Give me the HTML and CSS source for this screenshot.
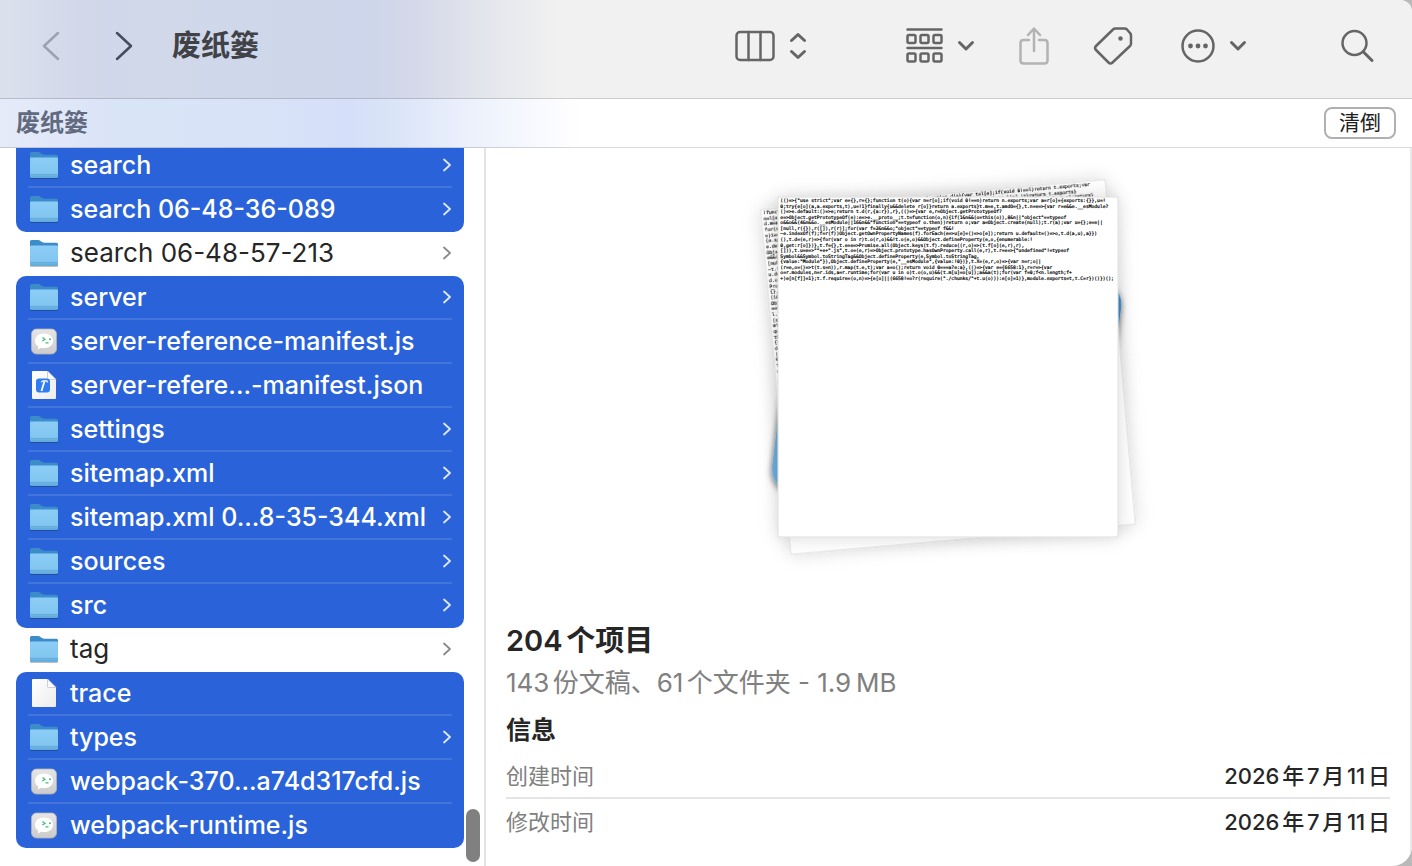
FILE: index.html
```html
<!DOCTYPE html>
<html lang="zh-CN">
<head>
    <meta charset="UTF-8">
    <meta name="viewport" content="width=device-width, initial-scale=1.0">
    <title>废纸篓</title>
    <link rel="stylesheet" href="styles.css">
</head>
<body>
    <!-- shared icons -->
    <svg class="sprite" aria-hidden="true">
        <defs>
            <linearGradient id="folder-front" x1="0" y1="0" x2="0" y2="1">
                <stop offset="0" stop-color="#8bcdf6"/>
                <stop offset="0.75" stop-color="#82c5f0"/>
                <stop offset="1" stop-color="#62acdb"/>
            </linearGradient>
            <linearGradient id="paper" x1="0" y1="0" x2="1" y2="1">
                <stop offset="0" stop-color="#ffffff"/>
                <stop offset="1" stop-color="#ececec"/>
            </linearGradient>
            <linearGradient id="app-bg" x1="0" y1="0" x2="0" y2="1">
                <stop offset="0" stop-color="#e6e6e6"/>
                <stop offset="1" stop-color="#cbcbcb"/>
            </linearGradient>
        </defs>
        <symbol id="folder" viewBox="0 0 32 32">
            <path d="M3 29h26" stroke="#000" stroke-opacity=".25" stroke-width="2" stroke-linecap="round"/>
            <path d="M2 4.500Q2 3 3.500 3H10q1.500 0 2.500 1l1.500 1q1 .7 2.500 .7H28.500Q30 5.700 30 7.200V14H2z" fill="#3c8cc9"/>
            <path d="M2 9.500Q2 8.500 3 8.500H29q1 0 1 1V27.500q0 1.500-1.500 1.500H3.500Q2 29 2 27.500z" fill="url(#folder-front)"/>
            <path d="M2 25.500H30M2 27.200H30" stroke="#5ba3d3" stroke-width=".6"/>
        </symbol>
        <symbol id="wechat" viewBox="0 0 32 32">
            <rect x="3.500" y="4" width="25" height="25" rx="5" fill="url(#app-bg)" stroke="#b4b4b4" stroke-width=".8"/>
            <path d="M16 8.500c-5.500 0-9 3.200-9 7.200 0 2.600 1.300 4.600 3.300 5.900l-.4 3 3.200-1.800c.9.200 1.900.3 2.900.3 5.500 0 9-3.300 9-7.400S21.500 8.500 16 8.500z" fill="#fff"/>
            <path d="M14.500 12.500l2.500 2-2.800 1.500M17.500 17.800h3" fill="none" stroke="#42bd74" stroke-width="1.200"/>
            <circle cx="22" cy="14.200" r="1" fill="#42bd74"/>
        </symbol>
        <symbol id="doc" viewBox="0 0 32 32">
            <path d="M5 2H19.500L28 10.500V29q0 1-1 1H5q-1 0-1-1V3q0-1 1-1z" fill="url(#paper)"/>
            <path d="M19.500 2V9.500q0 1 1 1H28z" fill="#fafafa" stroke="#c4c4c4" stroke-width=".8"/>
        </symbol>
        <symbol id="json" viewBox="0 0 32 32">
            <use href="#doc"/>
            <rect x="8" y="9.500" width="14" height="14" rx="3" fill="#2f7df0"/>
            <path d="M16.500 12l-3 10" stroke="#fff" stroke-width="1.800"/>
            <path d="M13 13q3-2 6-1l.5 1.500" fill="none" stroke="#dce9fb" stroke-width="1.500"/>
        </symbol>
        <symbol id="more-right" viewBox="0 0 10 14">
            <path d="M2 1.500L8 7 2 12.500" fill="none" stroke="currentColor" stroke-width="1.800" stroke-linecap="round" stroke-linejoin="round"/>
        </symbol>
        <symbol id="down" viewBox="0 0 18 12">
            <path d="M2.500 2.500L9 9l6.500-6.500" fill="none" stroke="currentColor" stroke-width="3" stroke-linecap="round" stroke-linejoin="round"/>
        </symbol>
    </svg>

    <div class="window">
        <header class="toolbar">
            <button class="tool disabled" aria-label="后退" disabled>
                <svg width="20" height="30" viewBox="0 0 20 30"><path d="M17 2L3 15l14 13" class="line"/></svg>
            </button>
            <button class="tool forward" aria-label="前进">
                <svg width="20" height="30" viewBox="0 0 20 30"><path d="M3 2l14 13L3 28" class="line"/></svg>
            </button>
            <h1>废纸篓</h1>
            <div class="tools">
                <button class="tool view" aria-label="显示方式">
                    <svg width="40" height="32" viewBox="0 0 40 32"><rect x="1.500" y="2" width="37" height="28" rx="3.500" class="line"/><path d="M13.500 2v28M25.500 2v28" class="line"/></svg>
                    <svg width="18" height="28" viewBox="0 0 18 28"><path d="M2.500 8.500L9 2.500l6.500 6M2.500 19.500L9 25.500l6.500-6" class="line bold"/></svg>
                </button>
                <button class="tool group" aria-label="分组">
                    <svg width="37" height="38" viewBox="0 0 37 38">
                        <path d="M1.500 2.500h34M1.500 21h34" class="line"/>
                        <g class="line">
                            <rect x="1.500" y="8" width="8" height="8" rx="1.500"/><rect x="14.500" y="8" width="8" height="8" rx="1.500"/><rect x="27.500" y="8" width="8" height="8" rx="1.500"/>
                            <rect x="1.500" y="26.500" width="8" height="8" rx="1.500"/><rect x="14.500" y="26.500" width="8" height="8" rx="1.500"/><rect x="27.500" y="26.500" width="8" height="8" rx="1.500"/>
                        </g>
                    </svg>
                    <svg width="18" height="12"><use href="#down"/></svg>
                </button>
                <button class="tool disabled" aria-label="共享" disabled>
                    <svg width="30" height="40" viewBox="0 0 30 40"><path d="M10 14H4.500Q1.500 14 1.500 17V34.500q0 3 3 3h21q3 0 3-3V17q0-3-3-3H20M15 25V3M9 9l6-6.500L21 9" class="line"/></svg>
                </button>
                <button class="tool" aria-label="标签">
                    <svg width="44" height="40" viewBox="0 0 44 40"><path d="M20 3.500q1-1 2.500-1h9q1.500 0 2.500 1l3 3.500q1 1 1 2.500v8q0 1.500-1 2.500L19.500 36.500q-2 2-4 0L3 24q-2-2 0-4z" class="line"/><circle cx="27.500" cy="12.500" r="2.200" fill="currentColor"/></svg>
                </button>
                <button class="tool more" aria-label="更多">
                    <svg width="34" height="34" viewBox="0 0 34 34"><circle cx="17" cy="17" r="15.500" class="line"/><g fill="currentColor"><circle cx="9.500" cy="17" r="2.400"/><circle cx="17" cy="17" r="2.400"/><circle cx="24.500" cy="17" r="2.400"/></g></svg>
                    <svg width="18" height="12"><use href="#down"/></svg>
                </button>
                <button class="tool" aria-label="搜索">
                    <svg width="34" height="34" viewBox="0 0 34 34"><circle cx="13.500" cy="14" r="12" class="line"/><path d="M22.500 23l8.500 8.500" class="line bold"/></svg>
                </button>
            </div>
        </header>

        <div class="trash-bar">
            <h2>废纸篓</h2>
            <button class="empty">清倒</button>
        </div>

        <main class="content">
            <nav class="column" aria-label="文件">
                <ul>
                    <li class="selected"><a href="#"><svg class="icon"><use href="#folder"/></svg><span>search</span><svg class="arrow"><use href="#more-right"/></svg></a></li>
                    <li class="selected last"><a href="#"><svg class="icon"><use href="#folder"/></svg><span>search 06-48-36-089</span><svg class="arrow"><use href="#more-right"/></svg></a></li>
                    <li><a href="#"><svg class="icon"><use href="#folder"/></svg><span>search 06-48-57-213</span><svg class="arrow"><use href="#more-right"/></svg></a></li>
                    <li class="selected first"><a href="#"><svg class="icon"><use href="#folder"/></svg><span>server</span><svg class="arrow"><use href="#more-right"/></svg></a></li>
                    <li class="selected"><a href="#"><svg class="icon"><use href="#wechat"/></svg><span>server-reference-manifest.js</span></a></li>
                    <li class="selected"><a href="#"><svg class="icon"><use href="#json"/></svg><span>server-refere...-manifest.json</span></a></li>
                    <li class="selected"><a href="#"><svg class="icon"><use href="#folder"/></svg><span>settings</span><svg class="arrow"><use href="#more-right"/></svg></a></li>
                    <li class="selected"><a href="#"><svg class="icon"><use href="#folder"/></svg><span>sitemap.xml</span><svg class="arrow"><use href="#more-right"/></svg></a></li>
                    <li class="selected"><a href="#"><svg class="icon"><use href="#folder"/></svg><span>sitemap.xml 0...8-35-344.xml</span><svg class="arrow"><use href="#more-right"/></svg></a></li>
                    <li class="selected"><a href="#"><svg class="icon"><use href="#folder"/></svg><span>sources</span><svg class="arrow"><use href="#more-right"/></svg></a></li>
                    <li class="selected last"><a href="#"><svg class="icon"><use href="#folder"/></svg><span>src</span><svg class="arrow"><use href="#more-right"/></svg></a></li>
                    <li><a href="#"><svg class="icon"><use href="#folder"/></svg><span>tag</span><svg class="arrow"><use href="#more-right"/></svg></a></li>
                    <li class="selected first"><a href="#"><svg class="icon"><use href="#doc"/></svg><span>trace</span></a></li>
                    <li class="selected"><a href="#"><svg class="icon"><use href="#folder"/></svg><span>types</span><svg class="arrow"><use href="#more-right"/></svg></a></li>
                    <li class="selected"><a href="#"><svg class="icon"><use href="#wechat"/></svg><span>webpack-370...a74d317cfd.js</span></a></li>
                    <li class="selected last"><a href="#"><svg class="icon"><use href="#wechat"/></svg><span>webpack-runtime.js</span></a></li>
                </ul>
                <div class="thumb"></div>
            </nav>

            <section class="preview">
                <div class="stack">
                    <svg class="sheets" viewBox="0 0 1260 1260">
                        <defs>
                            <filter id="shadow" x="-10%" y="-10%" width="120%" height="120%">
                                <feDropShadow dx="0" dy="0" stdDeviation="27" flood-opacity=".15"/>
                            </filter>
                            <filter id="dark-shadow" x="-10%" y="-10%" width="120%" height="120%">
                                <feDropShadow dx="0" dy="6" stdDeviation="9" flood-opacity=".6"/>
                            </filter>
                            <clipPath id="sheet-clip"><rect x="111" y="96" width="1038" height="1038"/></clipPath>
                        </defs>
                        <!-- folder at the bottom of the pile -->
                        <g transform="rotate(7 630 678)" filter="url(#dark-shadow)">
                            <rect x="135" y="309" width="981" height="738" rx="72" fill="#6db3e2"/>
                            <path d="M135 460V381q0-72 72-72H1044q72 0 72 72v79z" fill="#3f8fd2"/>
                        </g>
                        <g transform="rotate(-5 630 615)" filter="url(#shadow)">
                            <rect x="111" y="96" width="1038" height="1038" class="sheet"/>
                            <g class="code" clip-path="url(#sheet-clip)">
                                <text x="118" y="111">!function(){"use strict";var e,t,r,n,o,u={},l={},i=null,a;function d(e){var t=l[e];if(void 0!==l)return t.exports;var</text>
                                <text x="118" y="128">n=l[e]={exports:{}},r=!0;try{u[e].call(n.exports,n,n.exports,d),r=!1}finally{r&amp;&amp;delete l[e],!t}return t.exports}</text>
                                <text x="118" y="145">d.m=a,e=[],d.O=function(t,r,n,o){if(r){o=o||0;for(var u=e.length;u&gt;0&amp;&amp;e[u-1][2]&gt;o;u--)e[u]=e[u-1];e[u]=[r,n,o];return}</text>
                                <text x="118" y="162">for(s=0;s</text><text x="118" y="179">=)i==o&amp;&amp;</text><text x="118" y="196">{e.splice</text>
                                <text x="118" y="213">e.default</text><text x="118" y="230">Object.ge</text><text x="118" y="247">e&amp;&amp;(this)</text>
                                <text x="118" y="264">[null,r({</text><text x="118" y="281">~t.index</text><text x="118" y="298">u.default</text>
                                <text x="118" y="315">d.o(r,n)</text><text x="118" y="332">Promise.a</text><text x="118" y="349">{},t.u=fu</text>
                                <text x="118" y="366">(i&amp;&amp;this.</text><text x="118" y="383">Object.pr</text><text x="118" y="400">==typeof</text>
                                <text x="118" y="417">l.length</text><text x="118" y="434">(script,</text><text x="118" y="451">attribut</text>
                                <text x="118" y="468">queueMic</text><text x="118" y="485">this.glob</text><text x="118" y="502">{value:1}</text>
                                <text x="118" y="519">default:</text><text x="118" y="536">(e,t)=&gt;{</text><text x="118" y="553">0!==e[t]</text>
                                <text x="118" y="570">t.push(f</text><text x="118" y="587">define</text><text x="118" y="604">.then</text>
                                <text x="118" y="621">e.src</text><text x="118" y="638">0;var</text><text x="118" y="655">t.nc</text>
                            </g>
                        </g>
                        <g filter="url(#shadow)">
                            <rect x="120" y="105" width="1020" height="1020" class="sheet"/>
                        </g>
                        <g class="code">
                            <text x="127" y="120">(()=&gt;{"use strict";var e={},r={};function t(o){var n=r[o];if(void 0!==n)return n.exports;var a=r[o]={exports:{}},u=!</text>
                            <text x="127" y="137">0;try{e[o](a,a.exports,t),u=!1}finally{u&amp;&amp;delete r[o]}return a.exports}t.m=e,t.amdO={},t.n=e=&gt;{var r=e&amp;&amp;e.__esModule?</text>
                            <text x="127" y="154">()=&gt;e.default:()=&gt;e;return t.d(r,{a:r}),r},(()=&gt;{var e,r=Object.getPrototypeOf?</text>
                            <text x="127" y="170">e=&gt;Object.getPrototypeOf(e):e=&gt;e.__proto__;t.t=function(o,n){if(1&amp;n&amp;&amp;(o=this(o)),8&amp;n||"object"==typeof</text>
                            <text x="127" y="187">o&amp;&amp;o&amp;&amp;(4&amp;n&amp;&amp;o.__esModule||16&amp;n&amp;&amp;"function"==typeof o.then))return o;var a=Object.create(null);t.r(a);var u={};e=e||</text>
                            <text x="127" y="204">[null,r({}),r([]),r(r)];for(var f=2&amp;n&amp;&amp;o;"object"==typeof f&amp;&amp;!</text>
                            <text x="127" y="220">~e.indexOf(f);f=r(f))Object.getOwnPropertyNames(f).forEach(e=&gt;u[e]=()=&gt;o[e]);return u.default=()=&gt;o,t.d(a,u),a}})</text>
                            <text x="127" y="237">(),t.d=(e,r)=&gt;{for(var o in r)t.o(r,o)&amp;&amp;!t.o(e,o)&amp;&amp;Object.defineProperty(e,o,{enumerable:!</text>
                            <text x="127" y="254">0,get:r[o]})},t.f={},t.e=e=&gt;Promise.all(Object.keys(t.f).reduce((r,o)=&gt;(t.f[o](e,r),r),</text>
                            <text x="127" y="270">[])),t.u=e=&gt;""+e+".js",t.o=(e,r)=&gt;Object.prototype.hasOwnProperty.call(e,r),t.r=e=&gt;{"undefined"!=typeof</text>
                            <text x="127" y="287">Symbol&amp;&amp;Symbol.toStringTag&amp;&amp;Object.defineProperty(e,Symbol.toStringTag,</text>
                            <text x="127" y="304">{value:"Module"}),Object.defineProperty(e,"__esModule",{value:!0})},t.X=(e,r,o)=&gt;{var n=r;o||</text>
                            <text x="127" y="320">(r=e,o=()=&gt;t(t.s=n)),r.map(t.e,t);var a=o();return void 0===a?e:a},(()=&gt;{var e={6658:1},r=r=&gt;{var</text>
                            <text x="127" y="337">o=r.modules,n=r.ids,a=r.runtime;for(var u in o)t.o(o,u)&amp;&amp;(t.m[u]=o[u]);a&amp;&amp;a(t);for(var f=0;f&lt;n.length;f+</text>
                            <text x="127" y="354">+)e[n[f]]=1};t.f.require=(o,n)=&gt;{e[o]||(6658!=o?r(require("./chunks/"+t.u(o))):e[o]=1)},module.exports=t,t.C=r})()})();</text>
                        </g>
                    </svg>
                </div>
                <div class="info">
                    <h2>204个项目</h2>
                    <p>143份文稿、61个文件夹 - 1.9&thinsp;MB</p>
                    <h3>信息</h3>
                    <dl>
                        <div><dt>创建时间</dt><dd>2026年7月11日</dd></div>
                        <div><dt>修改时间</dt><dd>2026年7月11日</dd></div>
                    </dl>
                </div>
            </section>
        </main>
    </div>
</body>
</html>
```
FILE: styles.css
```css
* {
    box-sizing: border-box;
}

body {
    margin: 0;
    background-color: #b9b9b9;
    color: #262626;
    font-family: Inter, "Noto Sans CJK SC", sans-serif;
    text-autospace: normal;
}

h1, h2, h3, p, dl, dd, ul {
    margin: 0;
    padding: 0;
}

button {
    font-family: inherit;
    cursor: pointer;
}

svg {
    display: block;
    flex-shrink: 0;
}

.sprite {
    position: absolute;
    width: 0;
    height: 0;
}

.window {
    display: flex;
    flex-direction: column;
    height: 100vh;
    overflow: hidden;
    background-color: #fff;
    border-radius: 0 12px 20px 0;
}

/* toolbar */
.toolbar {
    display: flex;
    align-items: center;
    flex-shrink: 0;
    height: 99px;
    padding: 0 37px 6px 41px;
    border-bottom: 1px solid rgba(0, 0, 0, 0.15);
    background: linear-gradient(to right, #dbe1ec 0, #d2d7ea 80px, #d0d8ea 160px, #cdd6ea 370px, #d5d9e9 420px, #e3e5ec 480px, #f1f1f1 560px);
}

.toolbar h1 {
    margin-left: 38px;
    font-size: 29px;
    line-height: 40px;
    color: #404247;
}

.tool {
    display: flex;
    align-items: center;
    padding: 0;
    border: none;
    background: none;
    color: #656565;
}

.disabled {
    color: #b3b3b3;
}

.toolbar > .disabled {
    color: #9aa1b2;
}

.forward {
    margin-left: 53px;
    color: #454c60;
}

.line {
    fill: none;
    stroke: currentColor;
    stroke-width: 2.5;
    stroke-linecap: round;
    stroke-linejoin: round;
}

.bold {
    stroke-width: 3;
}

.tools {
    display: flex;
    align-items: center;
    gap: 44px;
    margin-left: auto;
}

.view {
    gap: 14px;
    margin-right: 55px;
}

.group,
.more {
    gap: 14px;
}

.more {
    margin-right: 50px;
}

/* bar below the toolbar */
.trash-bar {
    display: flex;
    align-items: center;
    justify-content: space-between;
    flex-shrink: 0;
    height: 49px;
    padding: 0 16px;
    border-bottom: 1px solid rgba(0, 0, 0, 0.15);
    background: linear-gradient(to right, #e6ebf9 0, #dae4f7 110px, #d9e3f7 240px, #d5dff9 350px, #d9e4f7 390px, #eef2fc 480px, #fff 580px);
}

.trash-bar h2 {
    font-size: 24px;
    line-height: 32px;
    color: #616a7e;
}

.empty {
    width: 72px;
    height: 32px;
    padding: 0;
    border: 2px solid #b0b0b0;
    border-radius: 8px;
    background-color: #fff;
    color: #1f1f1f;
    font-size: 21px;
    line-height: 28px;
}

.content {
    display: flex;
    flex: 1;
    min-height: 0;
}

/* file column */
.column {
    position: relative;
    display: flex;
    flex-direction: column;
    justify-content: flex-end;
    flex-shrink: 0;
    width: 486px;
    padding: 0 20px 18px 16px;
    border-right: 2px solid #e4e4e4;
    overflow: hidden;
}

.column ul {
    list-style: none;
}

.column li {
    height: 44px;
    padding: 0 12px;
}

.column a {
    display: flex;
    align-items: center;
    gap: 10px;
    height: 44px;
    border-bottom: 2px solid transparent;
    color: #262626;
    font-size: 26px;
    line-height: 30px;
    text-decoration: none;
    white-space: nowrap;
}

.column .selected {
    background-color: #2a63d9;
}

.column .selected a {
    border-bottom-color: #4375dd;
    color: #fff;
    font-size: 25px;
    font-weight: 500;
}

.column .first {
    border-radius: 10px 10px 0 0;
}

.column .last {
    border-radius: 0 0 10px 10px;
}

.column .last a {
    border-bottom-color: transparent;
}

.icon {
    width: 32px;
    height: 32px;
}

.arrow {
    width: 10px;
    height: 14px;
    margin-left: auto;
    color: #8a8a8a;
}

.selected .arrow {
    color: #dfe8fa;
}

.thumb {
    position: absolute;
    right: 4px;
    bottom: 4px;
    width: 14px;
    height: 53px;
    border-radius: 7px;
    background-color: #808080;
}

/* preview */
.preview {
    display: flex;
    flex-direction: column;
    flex: 1;
    min-width: 0;
    border-right: 2px solid #e8e8e8;
}

.stack {
    display: flex;
    justify-content: center;
    flex: 1;
    padding-top: 14px;
}

.sheets {
    width: 420px;
    height: 420px;
}

.sheet {
    fill: #fff;
    stroke: #dcdcdc;
    stroke-width: 3;
}

.code {
    fill: #000;
    stroke: #000;
    stroke-width: 0.6;
    font-family: "DejaVu Sans Mono", monospace;
    font-size: 14px;
    white-space: pre;
}

.info {
    padding: 0 20px 21px;
}

.info h2 {
    font-size: 29px;
    font-weight: 600;
    line-height: 36px;
}

.info p {
    color: #808080;
    font-size: 26px;
    line-height: 48px;
}

.info h3 {
    font-size: 25px;
    line-height: 46px;
}

.info dl div {
    display: flex;
    align-items: center;
    justify-content: space-between;
    height: 46px;
    padding-bottom: 2px;
    border-bottom: 2px solid transparent;
}

.info dl div:first-child {
    border-bottom-color: #e5e5e5;
}

.info dt {
    color: #808080;
    font-size: 22px;
}

.info dd {
    font-size: 22px;
    font-weight: 500;
}
```
